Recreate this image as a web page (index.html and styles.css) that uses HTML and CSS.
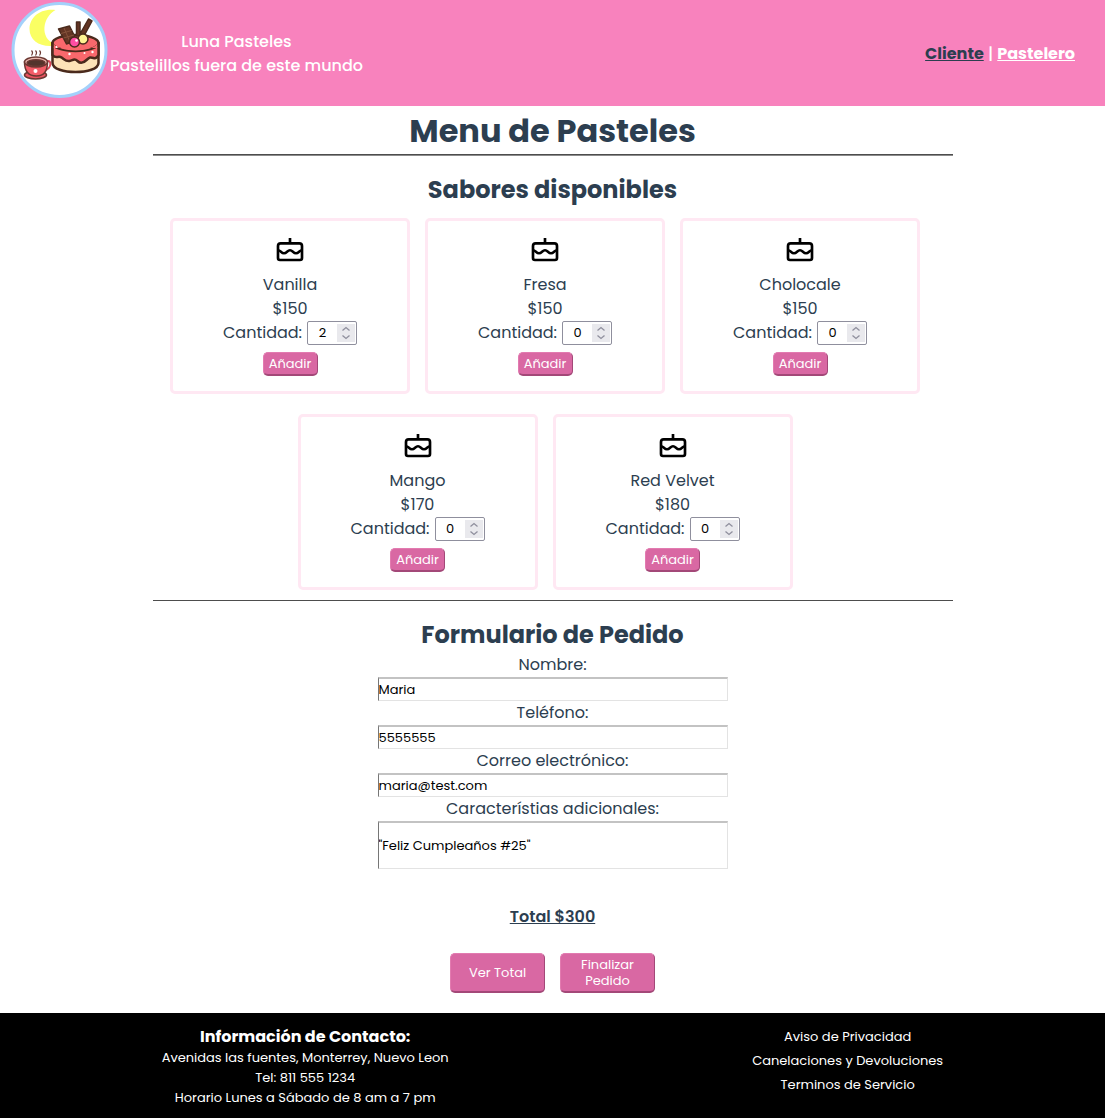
FILE: index.html
```html
<!DOCTYPE html>
<html lang="es">
<head>
<meta charset="utf-8">
<meta name="viewport" content="width=device-width, initial-scale=1">
<title>Luna Pasteles</title>
<link rel="stylesheet" href="styles.css">
</head>
<body>
<svg class="sprite" aria-hidden="true">
  <symbol id="cake" viewBox="0 0 24 24">
    <path d="M12 3v4M5 7h14a2 2 0 0 1 2 2v9a1.500 1.500 0 0 1-1.500 1.500h-15A1.500 1.500 0 0 1 3 18V9a2 2 0 0 1 2-2z" fill="none" stroke="#000" stroke-width="2"/>
    <path d="M3 12.200c2 0 2.400 2.300 4.500 2.300S10 12.200 12 12.200s2.400 2.300 4.500 2.300 2.500-2.300 4.500-2.300" fill="none" stroke="#000" stroke-width="1.900"/>
  </symbol>
  <symbol id="spin" viewBox="0 0 18 18">
    <path d="M0 0h18v18H0z" fill="#e9e9ed"/>
    <path d="M5.500 6.500 9 3.500l3.500 3M5.500 11.500l3.500 3 3.500-3" fill="none" stroke="#8f8f9d" stroke-width="1.300"/>
  </symbol>
</svg>
<header class="header">
  <div class="brand">
    <svg class="logo" viewBox="0 0 96 96" role="img" aria-label="Logo de Luna Pasteles">
      <circle cx="48" cy="48" r="46.500" fill="#fff" stroke="#a3d1fb" stroke-width="3"/>
      <path d="M44 8C28 6 18 16 18 27c0 11 10 18 23 17l2-2C28 36 31 15 44 8z" fill="#faff63"/>
      <g stroke="#4a2a1c" stroke-width="2.500" stroke-linejoin="round">
        <path d="M41 41v20c0 12 46 12 46 0V41z" fill="#fde3b8"/>
        <path d="M41 41v12c3 4 5 1 8 2s5 5 9 4 5-3 8 0 6 2 9-1 4-3 7-2 4-1 5-3V41z" fill="#f9686c"/>
        <ellipse cx="64" cy="41" rx="23" ry="8" fill="#f9686c"/>
      </g>
      <path d="M42.300 42c5 8 37 9 43.400 0v4H42.300z" fill="#f9686c"/>
      <g stroke="#4a2a1c" stroke-width="1.500" stroke-linejoin="round">
        <path d="M65 20h3.500v14H65zM77 17l3.500 2-8 15-4-2z" fill="#633524"/>
        <path d="m47 27 11-3 7 14-10 4z" fill="#633524"/>
        <path d="m49.500 31.500 10.500-3M52 36l10.500-3M52.500 26l6 14" fill="none" stroke="#84513a" stroke-width="1"/>
        <circle cx="71.500" cy="37" r="5" fill="#fff391"/>
        <circle cx="63" cy="40" r="5" fill="#ff4da4"/>
      </g>
      <g fill="#fff"><circle cx="65" cy="38.500" r="1.300"/><circle cx="45" cy="45" r="1"/><circle cx="58" cy="52" r="1.200"/><circle cx="73" cy="51" r="1"/><circle cx="81" cy="50" r="1.200"/></g>
      <g stroke="#6b3832" stroke-width="1.500">
        <ellipse cx="24" cy="73" rx="11" ry="4" fill="#e95360"/>
        <path d="M35 60c5-4 6 7-2 8" fill="none" stroke="#d94a59" stroke-width="2"/>
        <path d="M13 60c0 9 4 14 12 14s11-5 11-14z" fill="#f35d68"/>
        <ellipse cx="24.500" cy="60" rx="11.500" ry="5" fill="#e8b6ad"/>
        <ellipse cx="24.500" cy="61" rx="9" ry="3.300" fill="#54342c"/>
        <path d="M20 48.500q2 2 0 5M24 48.500q2 2 0 5M28 48.500q2 2 0 5" fill="none" stroke-width="1.200"/>
      </g>
      <circle cx="24" cy="69" r="2" fill="#fff"/>
    </svg>
    <p class="brand-text">Luna Pasteles<br>Pastelillos fuera de este mundo</p>
  </div>
  <nav class="nav"><a class="current" href="#cliente">Cliente</a> | <a href="#pastelero">Pastelero</a></nav>
</header>
<main class="main">
  <h1>Menu de Pasteles</h1>
  <hr class="title-rule">
  <section>
    <h2>Sabores disponibles</h2>
    <div class="cards">
      <article class="card">
        <svg class="cake"><use href="#cake"/></svg>
        <p>Vanilla</p><p>$150</p>
        <div class="quantity"><label for="q1">Cantidad:</label><span class="number"><input id="q1" type="number" min="0" value="2"><svg class="spin"><use href="#spin"/></svg></span></div>
        <button class="button add" type="button">Añadir</button>
      </article>
      <article class="card">
        <svg class="cake"><use href="#cake"/></svg>
        <p>Fresa</p><p>$150</p>
        <div class="quantity"><label for="q2">Cantidad:</label><span class="number"><input id="q2" type="number" min="0" value="0"><svg class="spin"><use href="#spin"/></svg></span></div>
        <button class="button add" type="button">Añadir</button>
      </article>
      <article class="card">
        <svg class="cake"><use href="#cake"/></svg>
        <p>Cholocale</p><p>$150</p>
        <div class="quantity"><label for="q3">Cantidad:</label><span class="number"><input id="q3" type="number" min="0" value="0"><svg class="spin"><use href="#spin"/></svg></span></div>
        <button class="button add" type="button">Añadir</button>
      </article>
      <article class="card">
        <svg class="cake"><use href="#cake"/></svg>
        <p>Mango</p><p>$170</p>
        <div class="quantity"><label for="q4">Cantidad:</label><span class="number"><input id="q4" type="number" min="0" value="0"><svg class="spin"><use href="#spin"/></svg></span></div>
        <button class="button add" type="button">Añadir</button>
      </article>
      <article class="card">
        <svg class="cake"><use href="#cake"/></svg>
        <p>Red Velvet</p><p>$180</p>
        <div class="quantity"><label for="q5">Cantidad:</label><span class="number"><input id="q5" type="number" min="0" value="0"><svg class="spin"><use href="#spin"/></svg></span></div>
        <button class="button add" type="button">Añadir</button>
      </article>
    </div>
  </section>
  <hr>
  <section>
    <h2>Formulario de Pedido</h2>
    <form class="form">
      <label for="nombre">Nombre:</label>
      <input class="field" id="nombre" type="text" value="Maria">
      <label for="telefono">Teléfono:</label>
      <input class="field" id="telefono" type="tel" value="5555555">
      <label for="correo">Correo electrónico:</label>
      <input class="field" id="correo" type="email" value="maria@test.com">
      <label for="extra">Característias adicionales:</label>
      <input class="field tall" id="extra" type="text" value="&quot;Feliz Cumpleaños #25&quot;">
      <p class="total">Total $300</p>
      <div class="actions">
        <button class="button" type="button">Ver Total</button>
        <button class="button" type="button">Finalizar Pedido</button>
      </div>
    </form>
  </section>
</main>
<footer class="footer">
  <address class="contact">
    <strong>Información de Contacto:</strong>
    <span>Avenidas las fuentes, Monterrey, Nuevo Leon</span>
    <span>Tel: 811 555 1234</span>
    <span>Horario Lunes a Sábado de 8 am a 7 pm</span>
  </address>
  <nav class="links">
    <a href="#privacidad">Aviso de Privacidad</a>
    <a href="#devoluciones">Canelaciones y Devoluciones</a>
    <a href="#terminos">Terminos de Servicio</a>
  </nav>
</footer>
</body>
</html>
```
FILE: styles.css
```css
* { box-sizing: border-box; margin: 0; padding: 0; }
body {
  min-height: 100vh;
  display: flex;
  flex-direction: column;
  font-family: Poppins, Inter, sans-serif;
  font-size: 16px;
  line-height: 24px;
  color: #2c3e50;
  background: #fff;
  text-align: center;
}
.sprite { display: none; }
.header {
  display: flex;
  justify-content: space-between;
  align-items: center;
  padding: 2px 30px 8px 11px;
  background: #f882bd;
  color: #fff;
  font-weight: 500;
}
.brand { display: flex; align-items: center; gap: 2px; }
.logo { width: 97px; height: 96px; }
.brand-text { padding-top: 7px; }
.nav { padding-top: 7px; }
.nav a { color: #fff; font-weight: 700; }
.nav .current { color: #2c3e50; }
.main { width: 100%; max-width: 800px; margin: 0 auto; flex: 1; }
h1 { padding-top: 1px; font-size: 32px; line-height: 47px; }
h2 { font-size: 24px; line-height: 36px; }
hr { border: 0; border-top: 1px solid #4d4d4d; }
.title-rule { border-bottom: 1px solid #8c8c8c; }
section { padding-top: 16px; }
.cards { display: flex; flex-wrap: wrap; justify-content: center; }
.card {
  width: 240px;
  height: 176px;
  margin: 10px 15px 10px 0;
  padding: 13px;
  border: 3px solid #ffe8f3;
  border-radius: 5px;
  display: flex;
  flex-direction: column;
  align-items: center;
}
.cake { width: 32px; height: 32px; margin-bottom: 7px; }
.quantity { display: flex; gap: 5px; }
.number { position: relative; display: block; }
.number input {
  display: block;
  width: 50px;
  height: 24px;
  padding-right: 19px;
  border: 1px solid #8f8f9d;
  border-radius: 2px;
  font: 13px/20px Poppins, Inter, sans-serif;
  text-align: center;
  appearance: textfield;
}
.number input::-webkit-inner-spin-button { appearance: none; margin: 0; }
.spin { position: absolute; top: 3px; right: 2px; width: 18px; height: 18px; pointer-events: none; }
.button {
  width: 95px;
  height: 40px;
  padding: 0 10px;
  border: 1px solid;
  border-color: #e27bb0 #a34878 #a34878 #e27bb0;
  border-bottom-width: 2px;
  border-radius: 5px;
  background: #d968a3;
  color: #fff;
  font: 13px/16px Poppins, Inter, sans-serif;
}
.add { width: 55px; height: 24px; margin-top: 7px; padding: 0; }
.form { display: flex; flex-direction: column; align-items: center; }
.field {
  width: 350px;
  max-width: 100%;
  height: 24px;
  border: 1px solid #e3e3e3;
  border-top: 2px solid #c3c3c3;
  border-left-color: #767676;
  color: #000;
  font: 13px/20px Poppins, Inter, sans-serif;
}
.tall { height: 48px; }
.total { margin: 36px 0 24px; font-weight: 600; text-decoration: underline; }
.actions { display: flex; gap: 15px; margin-bottom: 20px; }
.footer {
  display: grid;
  grid-template-columns: 9fr 7fr;
  padding: 12px 20px 10px 0;
  background: #000;
  color: #fff;
}
.contact { display: flex; flex-direction: column; font-size: 13px; font-style: normal; line-height: 20px; }
.contact strong { font-size: 16px; line-height: 23px; }
.links { display: flex; flex-direction: column; align-items: center; font-size: 13px; }
.links a { color: #fff; text-decoration: none; }
```
